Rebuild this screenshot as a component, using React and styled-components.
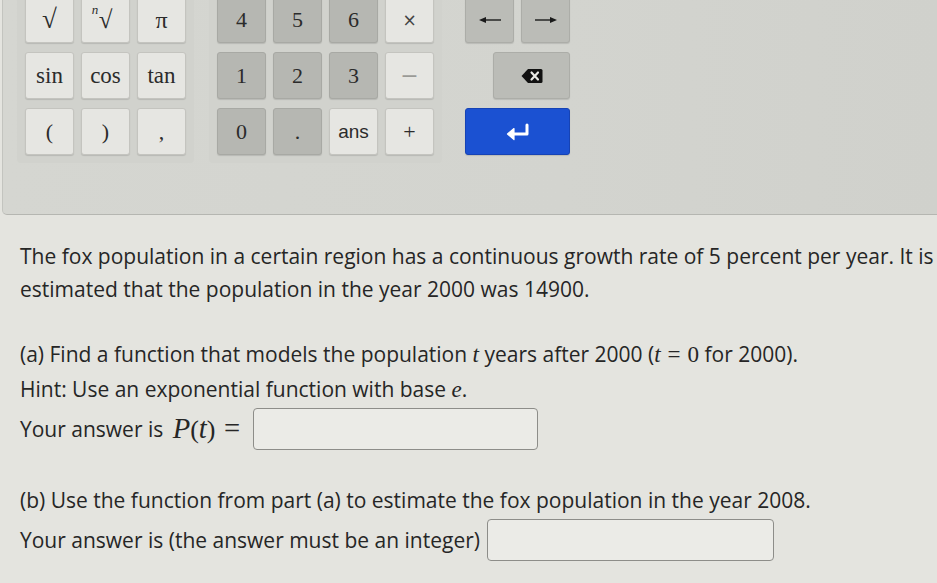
import React from "react";
import styled, { createGlobalStyle } from "styled-components";

const GlobalStyle = createGlobalStyle`
  html, body {
    margin: 0;
    padding: 0;
    background: #e4e4df;
  }
  body {
    width: 937px;
    height: 583px;
    overflow: hidden;
    font-family: "Open Sans", "Liberation Sans", sans-serif;
    color: #262626;
  }
`;

const keyColors = {
  light: { bg: "#e6e6e2", border: "#c4c4bf", color: "#2b2b2b" },
  dark: { bg: "#b6b7b2", border: "#a8a9a4", color: "#2b2b2b" },
  nav: { bg: "#bbbcb7", border: "#acada8", color: "#111" },
  enter: { bg: "#1b51d2", border: "#1643b5", color: "#fff" },
};

function ArrowIcon({ dir }) {
  const flip = dir === "left" ? "scale(-1,1) translate(-26,0)" : "";
  return (
    <svg width="26" height="12" viewBox="0 0 26 12">
      <g transform={flip}>
        <line x1="2" y1="6" x2="20" y2="6" stroke="#1a1a1a" strokeWidth="1.4" />
        <path d="M17 3 L24 6 L17 9 Z" fill="#1a1a1a" />
      </g>
    </svg>
  );
}

function BackspaceIcon() {
  return (
    <svg width="22" height="16" viewBox="0 0 22 16">
      <path d="M7 1 H20 A1.5 1.5 0 0 1 21.5 2.5 V13.5 A1.5 1.5 0 0 1 20 15 H7 L0.5 8 Z" fill="#111" />
      <path d="M10.5 4.5 L17 11.5 M17 4.5 L10.5 11.5" stroke="#e8e8e4" strokeWidth="2.2" strokeLinecap="round" />
    </svg>
  );
}

function EnterIcon() {
  return (
    <svg width="26" height="18" viewBox="0 0 26 18">
      <path d="M22 2 V11 H7" fill="none" stroke="#fff" strokeWidth="3" strokeLinecap="round" strokeLinejoin="round" />
      <path d="M9 5.5 L2.5 11 L9 16.5 Z" fill="#fff" stroke="#fff" strokeWidth="1.2" strokeLinejoin="round" />
    </svg>
  );
}

export default function App() {
  return (
    <>
      <GlobalStyle />
      <Page>
        <Keypad>
          <Group $cols={3}>
            <Key $variant="light"><Serif $size={27}>√</Serif></Key>
            <Key $variant="light">
              <Serif $size={25}>
                <RootIndex>n</RootIndex>√
              </Serif>
            </Key>
            <Key $variant="light"><Serif $size={24}>π</Serif></Key>
            <Key $variant="light"><Serif $size={23}>sin</Serif></Key>
            <Key $variant="light"><Serif $size={23}>cos</Serif></Key>
            <Key $variant="light"><Serif $size={23}>tan</Serif></Key>
            <Key $variant="light"><Serif>(</Serif></Key>
            <Key $variant="light"><Serif>)</Serif></Key>
            <Key $variant="light"><Serif>,</Serif></Key>
          </Group>
          <Group $cols={4}>
            <Key $variant="dark"><Serif>4</Serif></Key>
            <Key $variant="dark"><Serif>5</Serif></Key>
            <Key $variant="dark"><Serif>6</Serif></Key>
            <Key $variant="light"><OpSign>×</OpSign></Key>
            <Key $variant="dark"><Serif>1</Serif></Key>
            <Key $variant="dark"><Serif>2</Serif></Key>
            <Key $variant="dark"><Serif>3</Serif></Key>
            <Key $variant="light"><OpSign $faint>−</OpSign></Key>
            <Key $variant="dark"><Serif>0</Serif></Key>
            <Key $variant="dark"><Serif>.</Serif></Key>
            <Key $variant="light"><Sans>ans</Sans></Key>
            <Key $variant="light"><Serif>+</Serif></Key>
          </Group>
          <NavGroup>
            <Key $variant="nav"><ArrowIcon dir="left" /></Key>
            <Key $variant="nav"><ArrowIcon dir="right" /></Key>
            <BackKey $variant="nav"><BackspaceIcon /></BackKey>
            <WideKey $variant="enter"><EnterIcon /></WideKey>
          </NavGroup>
        </Keypad>

        <Content>
          <Paragraph>
            The fox population in a certain region has a continuous growth rate of 5 percent per year. It is
            <br />
            estimated that the population in the year 2000 was 14900.
          </Paragraph>

          <Part>
            <Line>
              (a) Find a function that models the population <MathI>t</MathI> years after 2000 (
              <MathI>t</MathI>
              <MathR $wide>=</MathR>
              <MathR>0</MathR> for 2000).
            </Line>
            <Line>
              Hint: Use an exponential function with base <MathI>e</MathI>.
            </Line>
            <AnswerRow>
              Your answer is&nbsp;
              <BigMath>
                <MathI>P</MathI>(<MathI>t</MathI>)<MathR $wide>=</MathR>
              </BigMath>
              <AnswerBox $width={285} />
            </AnswerRow>
          </Part>

          <Part $gap={34}>
            <Line>(b) Use the function from part (a) to estimate the fox population in the year 2008.</Line>
            <AnswerRow>
              Your answer is (the answer must be an integer)
              <AnswerBox $width={287} $gap={7} />
            </AnswerRow>
          </Part>
        </Content>
      </Page>
    </>
  );
}

const Page = styled.div`
  display: flex;
  flex-direction: column;
  height: 583px;
`;

const Keypad = styled.div`
  height: 215px;
  box-sizing: border-box;
  margin-left: 2px;
  padding-left: 14px;
  display: flex;
  align-items: flex-start;
  gap: 15px;
  background: linear-gradient(90deg, #d5d6d1 0%, #d3d4cf 60%, #d0d1cc 100%);
  border-left: 1px solid #c3c4bf;
  border-bottom: 1px solid #b5b6b1;
  border-bottom-left-radius: 5px;
  overflow: hidden;
`;

const Group = styled.div`
  display: grid;
  grid-template-columns: repeat(${(p) => p.$cols}, 49px);
  grid-auto-rows: 47px;
  gap: 9px 7px;
  padding: 8px;
  margin-top: -12px;
  background: #d1d2cd;
  border-radius: 4px;
`;

const NavGroup = styled(Group)`
  grid-template-columns: repeat(2, 49px);
  background: transparent;
`;

const Key = styled.div`
  display: flex;
  align-items: center;
  justify-content: center;
  box-sizing: border-box;
  border-radius: 3px;
  background: ${(p) => keyColors[p.$variant].bg};
  border: 1px solid ${(p) => keyColors[p.$variant].border};
  color: ${(p) => keyColors[p.$variant].color};
  box-shadow: 0 1px 1px rgba(0, 0, 0, 0.12);
`;

const BackKey = styled(Key)`
  grid-column: 1 / span 2;
  justify-self: end;
  width: 77px;
`;

const WideKey = styled(Key)`
  grid-column: 1 / span 2;
`;

const Serif = styled.span`
  position: relative;
  font-family: "Liberation Serif", "DejaVu Serif", serif;
  font-size: ${(p) => p.$size || 22}px;
  line-height: 1;
`;

const RootIndex = styled.span`
  position: absolute;
  left: -7px;
  top: -4px;
  font-size: 13px;
  line-height: 1;
  font-style: italic;
`;

const Sans = styled.span`
  font-family: "Liberation Sans", Arial, sans-serif;
  font-size: 19px;
`;

const OpSign = styled.span`
  font-family: "DejaVu Sans", sans-serif;
  font-size: ${(p) => (p.$faint ? "22px" : "17px")};
  color: ${(p) => (p.$faint ? "#9a9a96" : "#444")};
`;

const Content = styled.div`
  padding: 25px 0 0 20px;
  font-size: 21px;
  line-height: 33px;
  white-space: nowrap;
`;

const Paragraph = styled.p`
  margin: 0;
`;

const Part = styled.div`
  margin-top: ${(p) => p.$gap || 32}px;
  display: flex;
  flex-direction: column;
  gap: 2px;
`;

const Line = styled.div`
  line-height: 33px;
`;

const MathI = styled.span`
  font-family: "Liberation Serif", "DejaVu Serif", serif;
  font-style: italic;
  font-size: 1.1em;
`;

const MathR = styled.span`
  font-family: "Liberation Serif", "DejaVu Serif", serif;
  font-size: 1.1em;
  margin: ${(p) => (p.$wide ? "0 0.3em" : "0")};
`;

const BigMath = styled.span`
  font-family: "Liberation Serif", "DejaVu Serif", serif;
  font-size: 26px;
  display: inline-flex;
  align-items: baseline;
  margin-left: 4px;
  margin-right: 4px;
`;

const AnswerRow = styled.div`
  display: flex;
  align-items: center;
  height: 42px;
`;

const AnswerBox = styled.div`
  width: ${(p) => p.$width}px;
  height: 42px;
  box-sizing: border-box;
  margin-left: ${(p) => p.$gap || 0}px;
  border: 1.5px solid #8d8d89;
  border-radius: 4px;
  background: #ebebe7;
`;
